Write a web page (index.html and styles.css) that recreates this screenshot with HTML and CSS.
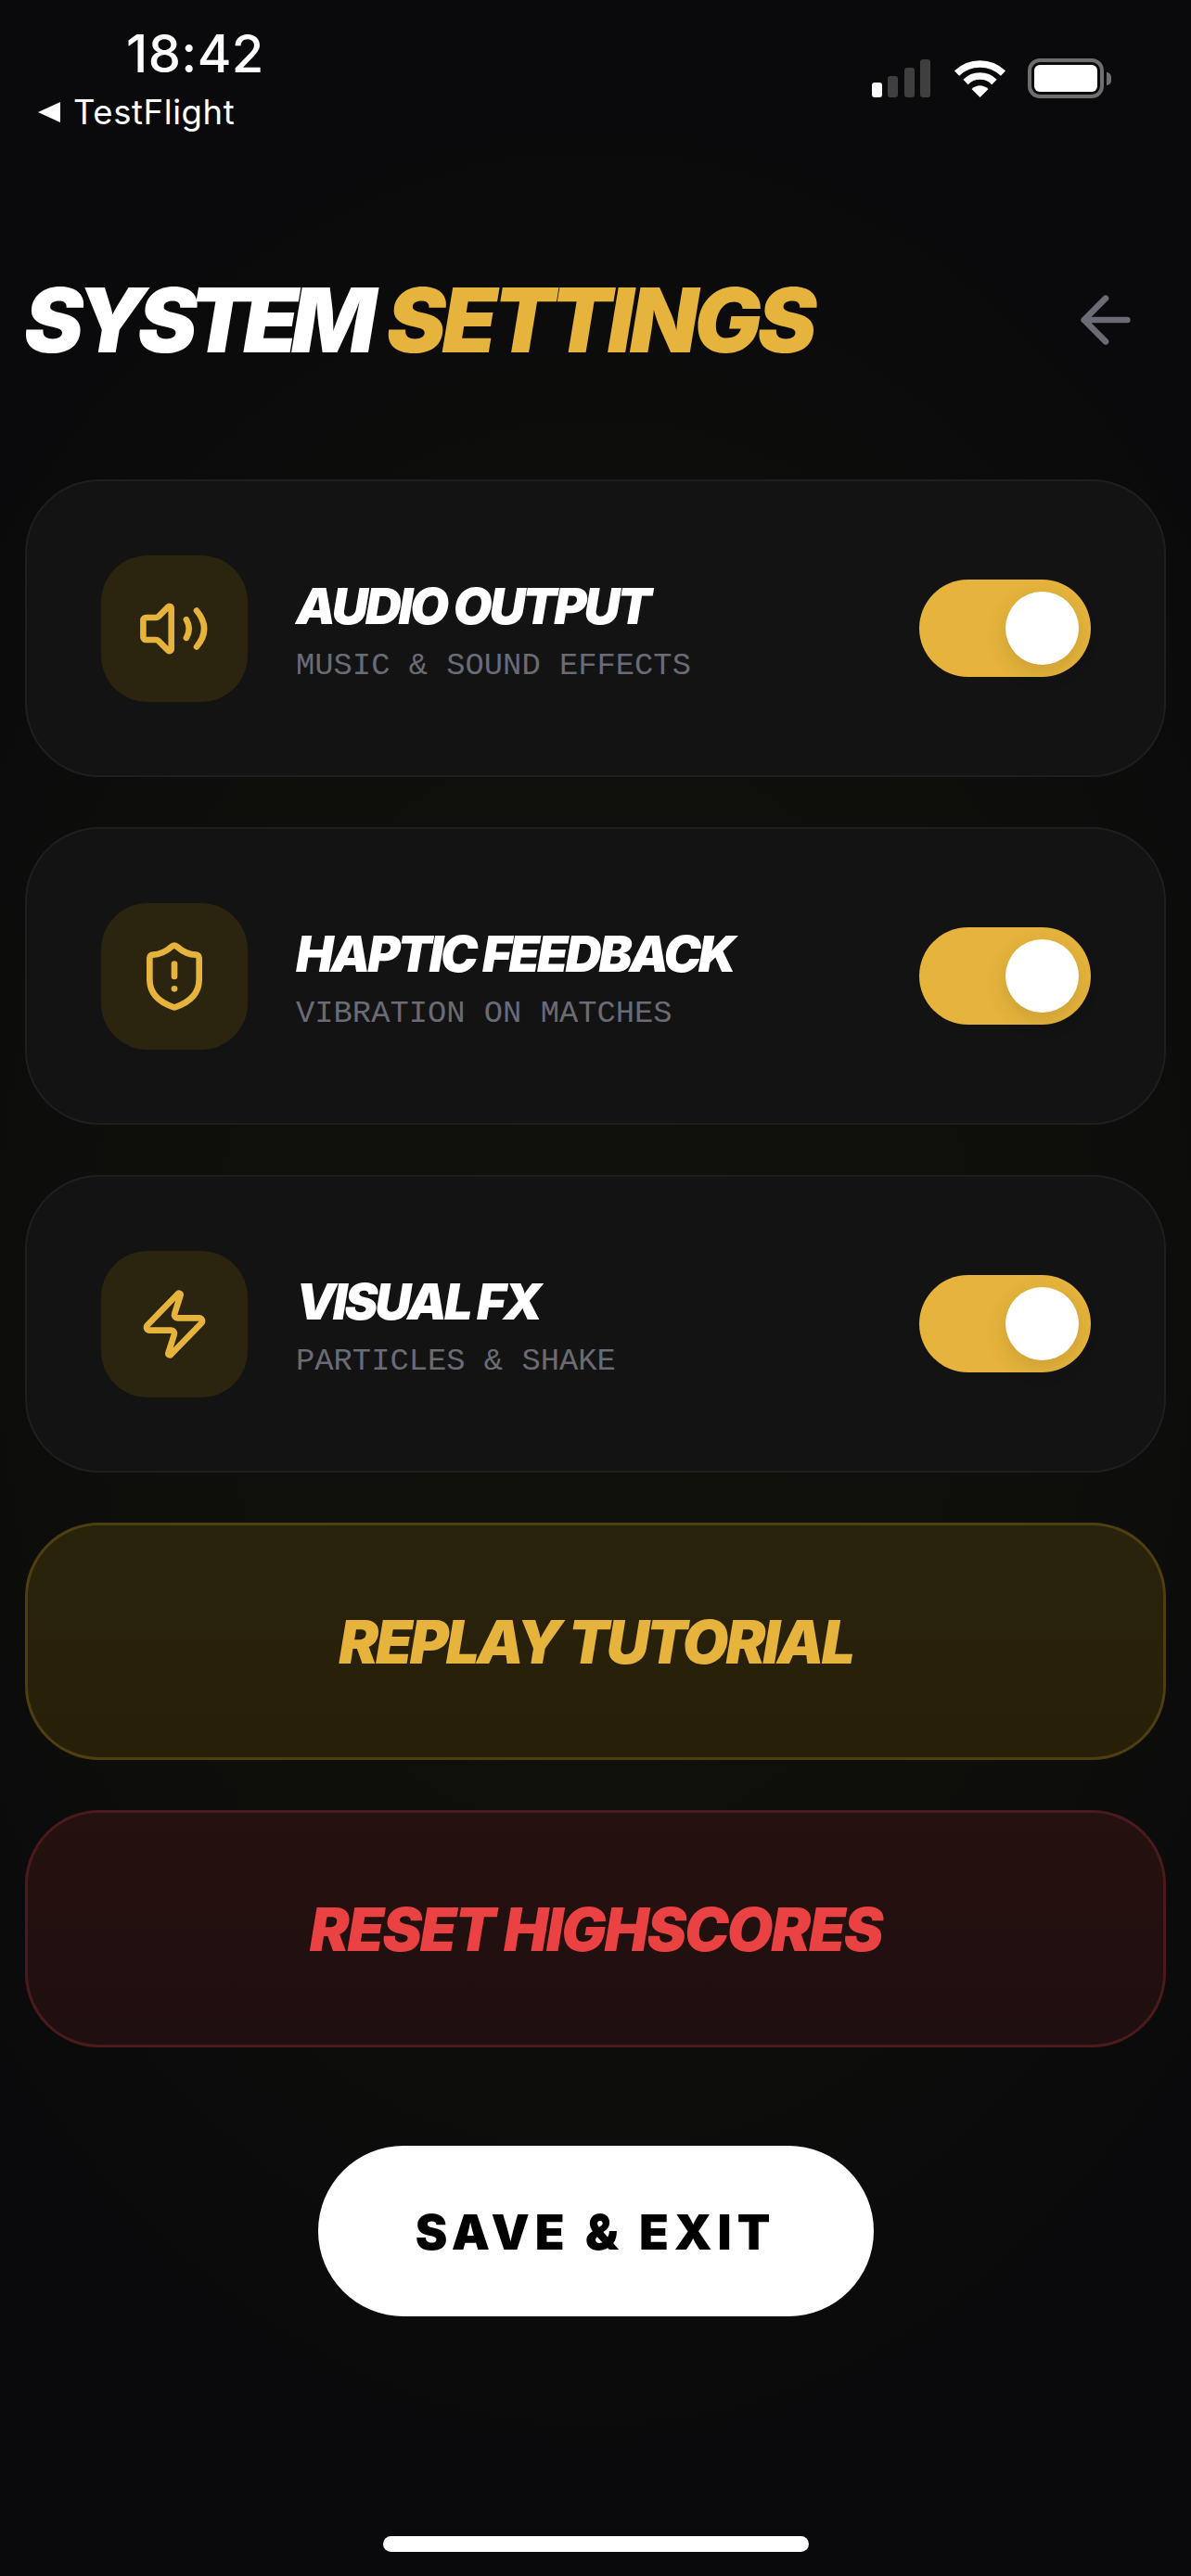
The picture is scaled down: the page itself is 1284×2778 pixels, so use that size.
FILE: index.html
```html
<!DOCTYPE html>
<html lang="en">
<head>
    <meta charset="UTF-8">
    <meta name="viewport" content="width=device-width, initial-scale=1.0">
    <title>System Settings</title>
    <link rel="stylesheet" href="styles.css">
</head>
<body>
    <div class="screen">
        <div class="status-bar">
            <div class="status-left">
                <div class="clock">18:42</div>
                <div class="return-link"><span class="return-arrow"></span>TestFlight</div>
            </div>
            <div class="status-right">
                <div class="signal">
                    <span class="bar bar-1 bar-on"></span>
                    <span class="bar bar-2"></span>
                    <span class="bar bar-3"></span>
                    <span class="bar bar-4"></span>
                </div>
                <svg class="wifi" viewBox="0 0 55 40" width="55" height="40">
                    <path d="M2.5 14a36 36 0 0 1 50 0" fill="none" stroke="#fff" stroke-width="7.5"/>
                    <path d="M12 23.5a22 22 0 0 1 31 0" fill="none" stroke="#fff" stroke-width="7.5"/>
                    <path d="M27.5 40L18.5 31Q27.5 23.5 36.5 31Z" fill="#fff"/>
                </svg>
                <div class="battery">
                    <div class="battery-body"><div class="battery-fill"></div></div>
                    <div class="battery-cap"></div>
                </div>
            </div>
        </div>

        <div class="header">
            <h1><span class="title-white">SYSTEM</span> <span class="title-gold">SETTINGS</span></h1>
            <svg class="back-icon" viewBox="0 0 24 24" width="80" height="80">
                <path d="M12 19l-7-7 7-7M19 12H5"/>
            </svg>
        </div>

        <div class="list">
            <div class="card">
                <div class="icon-box">
                    <svg class="icon icon-small" viewBox="0 0 24 24">
                        <path d="M10.9 4.7a.7.7 0 0 0-1.2-.5L6.3 7.6A1.4 1.4 0 0 1 5.3 8H1.8a1 1 0 0 0-1 1v6a1 1 0 0 0 1 1h3.5a1.4 1.4 0 0 1 1 .4l3.4 3.4a.7.7 0 0 0 1.2-.5z"/>
                        <path d="M16.3 8.7Q18.2 12 16.3 15.3"/>
                        <path d="M20 5.5Q25.4 12 20 18.5"/>
                    </svg>
                </div>
                <div class="card-text">
                    <div class="card-title">AUDIO OUTPUT</div>
                    <div class="card-sub">MUSIC &amp; SOUND EFFECTS</div>
                </div>
                <div class="toggle"><div class="knob"></div></div>
            </div>

            <div class="card">
                <div class="icon-box">
                    <svg class="icon" viewBox="0 0 24 24">
                        <path d="M20 13c0 5-3.5 7.5-7.66 8.95a1 1 0 0 1-.67-.01C7.5 20.5 4 18 4 13V6a1 1 0 0 1 1-1c2 0 4.5-1.2 6.24-2.72a1.17 1.17 0 0 1 1.52 0C14.51 3.81 17 5 19 5a1 1 0 0 1 1 1z"/>
                        <path d="M12 8v4"/>
                        <path d="M12 16h.01"/>
                    </svg>
                </div>
                <div class="card-text">
                    <div class="card-title">HAPTIC FEEDBACK</div>
                    <div class="card-sub">VIBRATION ON MATCHES</div>
                </div>
                <div class="toggle"><div class="knob"></div></div>
            </div>

            <div class="card">
                <div class="icon-box">
                    <svg class="icon" viewBox="0 0 24 24">
                        <path d="M4 14a1 1 0 0 1-.78-1.63l9.9-10.2a.5.5 0 0 1 .86.46l-1.92 6.02A1 1 0 0 0 13 10h7a1 1 0 0 1 .78 1.63l-9.9 10.2a.5.5 0 0 1-.86-.46l1.92-6.02A1 1 0 0 0 11 14z"/>
                    </svg>
                </div>
                <div class="card-text">
                    <div class="card-title">VISUAL FX</div>
                    <div class="card-sub">PARTICLES &amp; SHAKE</div>
                </div>
                <div class="toggle"><div class="knob"></div></div>
            </div>

            <button class="action action-gold">REPLAY TUTORIAL</button>
            <button class="action action-red">RESET HIGHSCORES</button>
        </div>

        <button class="save-btn">SAVE &amp; EXIT</button>
        <div class="home-bar"></div>
    </div>
</body>
</html>
```

FILE: styles.css
```css
* {
    box-sizing: border-box;
}
html, body {
    margin: 0;
    padding: 0;
    background-color: #0a0a0c;
}
.screen {
    width: 1284px;
    height: 2778px;
    overflow: hidden;
    display: flex;
    flex-direction: column;
    font-family: Inter, 'Liberation Sans', sans-serif;
    color: #fff;
    background-image: radial-gradient(ellipse 900px 1300px at 50% 50%, #11110b 0%, #0e0e0b 55%, #0a0a0c 100%);
}

/* status bar */
.status-bar {
    height: 144px;
    display: flex;
    justify-content: space-between;
    flex-shrink: 0;
}
.status-left {
    width: 300px;
    padding-top: 26px;
    padding-left: 41px;
}
.clock {
    font-size: 56px;
    font-weight: 500;
    line-height: 64px;
    margin-left: 95px;
    letter-spacing: 0.4px;
}
.return-link {
    display: flex;
    align-items: center;
    font-size: 36.5px;
    font-weight: 400;
    line-height: 44px;
    margin-top: 9px;
    letter-spacing: 0.6px;
}
.return-arrow {
    width: 0;
    height: 0;
    border-top: 11px solid transparent;
    border-bottom: 11px solid transparent;
    border-right: 24px solid #fff;
    margin-right: 14px;
}
.status-right {
    display: flex;
    align-items: flex-end;
    height: 106px;
    padding-right: 86px;
}
.signal {
    display: flex;
    align-items: flex-end;
    gap: 6.5px;
    margin-right: 25.5px;
    margin-bottom: 1px;
}
.bar {
    width: 11px;
    border-radius: 3px;
    background-color: #3f3f3f;
}
.bar-on {
    background-color: #fff;
}
.bar-1 { height: 16px; }
.bar-2 { height: 23px; }
.bar-3 { height: 32px; }
.bar-4 { height: 41px; }
.wifi {
    display: block;
    margin-right: 24px;
    margin-bottom: 1px;
}
.battery {
    display: flex;
    align-items: center;
}
.battery-body {
    width: 82px;
    height: 43px;
    border: 4px solid #6e6e6e;
    border-radius: 13px;
    padding: 3px;
}
.battery-fill {
    width: 100%;
    height: 100%;
    background-color: #fff;
    border-radius: 6px;
}
.battery-cap {
    width: 5px;
    height: 14px;
    margin-left: 3.5px;
    background-color: #6e6e6e;
    border-radius: 0 7px 7px 0;
}

/* header */
.header {
    display: flex;
    align-items: center;
    justify-content: space-between;
    padding: 0 52px 0 26px;
    margin-top: 161px;
}
h1 {
    margin: 0;
    font-size: 96px;
    line-height: 80px;
    font-weight: 900;
    font-style: italic;
}
.title-white {
    color: #fff;
    letter-spacing: -8px;
}
.title-gold {
    color: #e6b43c;
    letter-spacing: -4.3px;
}
.back-icon {
    display: block;
    fill: none;
    stroke: #6b6b75;
    stroke-width: 2;
    stroke-linecap: round;
    stroke-linejoin: round;
}

/* settings list */
.list {
    display: flex;
    flex-direction: column;
    gap: 54px;
    padding: 0 27px;
    margin-top: 132px;
}
.card {
    height: 321px;
    display: flex;
    align-items: center;
    padding: 0 79px 0 80px;
    background-color: #131314;
    border: 2px solid #1f1f20;
    border-radius: 80px;
}
.icon-box {
    width: 158px;
    height: 158px;
    flex-shrink: 0;
    display: flex;
    align-items: center;
    justify-content: center;
    background-color: #2b240f;
    border-radius: 50px;
}
.icon {
    width: 80px;
    height: 80px;
    overflow: visible;
    fill: none;
    stroke: #e6b43c;
    stroke-width: 2;
    stroke-linecap: round;
    stroke-linejoin: round;
}
.icon-small {
    width: 72px;
    height: 72px;
    stroke-width: 2.2;
}
.card-text {
    flex: 1;
    margin-left: 52px;
    padding-top: 7px;
}
.card-title {
    font-size: 54px;
    line-height: 60px;
    font-weight: 900;
    font-style: italic;
    letter-spacing: -3.1px;
}
.card-sub {
    font-family: 'Liberation Mono', monospace;
    font-size: 33.8px;
    line-height: 40px;
    margin-top: 14px;
    color: #6b6b75;
}
.toggle {
    width: 185px;
    height: 105px;
    flex-shrink: 0;
    padding: 13px;
    display: flex;
    justify-content: flex-end;
    background-color: #e6b43c;
    border-radius: 53px;
}
.knob {
    width: 79px;
    height: 79px;
    background-color: #fff;
    border-radius: 50%;
    box-shadow: 0 8px 24px rgba(0, 0, 0, 0.12);
}

/* buttons */
.action {
    height: 256px;
    font-family: inherit;
    font-size: 64px;
    font-weight: 900;
    font-style: italic;
    border-radius: 80px;
    border: 3px solid;
}
.action-gold {
    color: #e6b43c;
    background-image: linear-gradient(to bottom, #2a230b, #271f08);
    border-color: #4f3e10;
    letter-spacing: -3px;
}
.action-red {
    color: #ea4242;
    background-image: linear-gradient(to bottom, #25110f, #200f10);
    border-color: #4a1a1c;
    letter-spacing: -2.1px;
}
.save-btn {
    width: 599px;
    height: 184px;
    flex-shrink: 0;
    margin: 106px auto 0;
    padding-top: 4px;
    font-family: inherit;
    font-size: 52px;
    font-weight: 900;
    letter-spacing: 5.9px;
    color: #000;
    background-color: #fff;
    border: none;
    border-radius: 92px;
}
.home-bar {
    width: 459px;
    height: 17px;
    flex-shrink: 0;
    margin: 237px auto 0;
    background-color: #fff;
    border-radius: 9px;
}
```
